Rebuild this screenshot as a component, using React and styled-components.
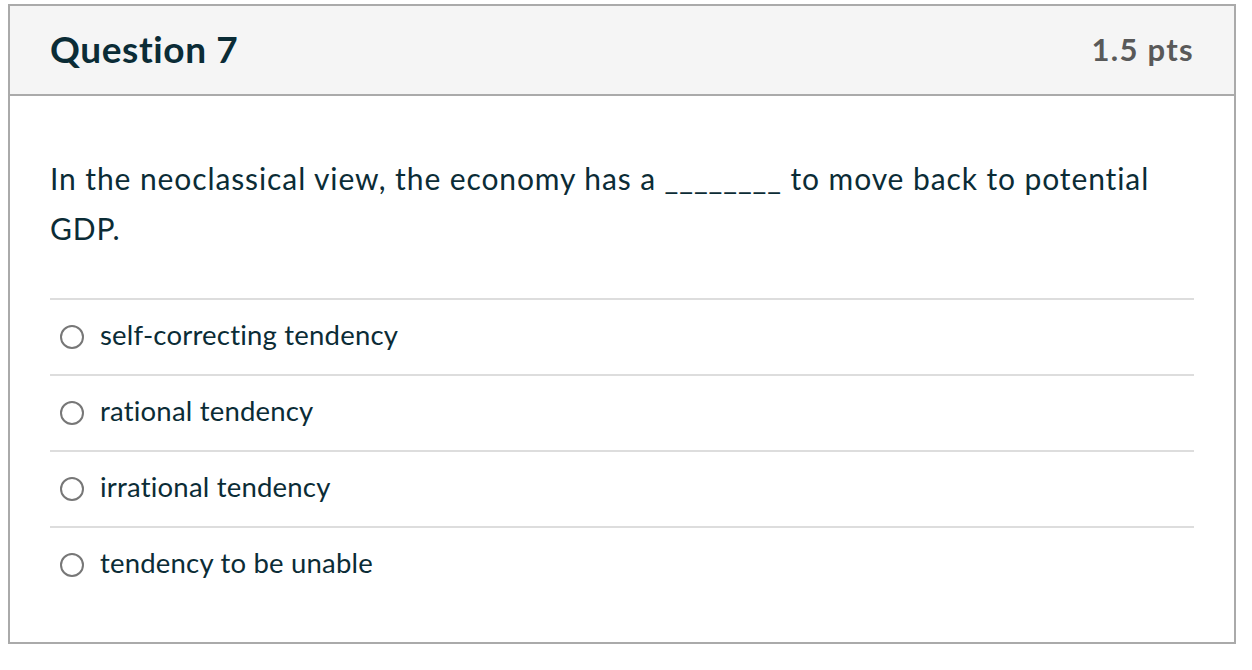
import React from 'react'
import styled, { createGlobalStyle } from 'styled-components'

const GlobalStyle = createGlobalStyle`
    body {
        margin: 0;
        background: #fff;
        font-family: Lato, "Open Sans", sans-serif;
    }
`;

const answers = [
    'self-correcting tendency',
    'rational tendency',
    'irrational tendency',
    'tendency to be unable'
]

const App = () => {
    return (
        <Page>
            <GlobalStyle />
            <Card>
                <Header>
                    <Title>Question 7</Title>
                    <Points>1.5 pts</Points>
                </Header>
                <Body>
                    <Prompt>
                        In the neoclassical view, the economy has a ________ to move back to potential GDP.
                    </Prompt>
                    <Answers>
                        {answers.map(a => (
                            <Answer key={a}>
                                <Radio type="radio" name="q7" />
                                <AnswerText>{a}</AnswerText>
                            </Answer>
                        ))}
                    </Answers>
                </Body>
            </Card>
        </Page>
    )
}

const Page = styled.div`
    padding: 4px 16px 0 8px;
`;

const Card = styled.div`
    width: 1228px;
    height: 640px;
    box-sizing: border-box;
    border: 2px solid #aaaaaa;
    display: flex;
    flex-direction: column;
`;

const Header = styled.div`
    height: 90px;
    box-sizing: border-box;
    background: #f5f5f5;
    border-bottom: 2px solid #aaaaaa;
    display: flex;
    align-items: center;
    justify-content: space-between;
    padding: 0 40px 3px;
`;

const Title = styled.h2`
    margin: 0;
    font-size: 37px;
    font-weight: 700;
    letter-spacing: 0.6px;
    color: #0b2c36;
`;

const Points = styled.div`
    font-size: 31px;
    font-weight: 700;
    letter-spacing: 1.3px;
    color: #595959;
`;

const Body = styled.div`
    padding: 57px 40px 0;
`;

const Prompt = styled.p`
    margin: 0 0 45px;
    font-size: 30px;
    line-height: 50px;
    letter-spacing: 0.9px;
    color: #0b2c36;
`;

const Answers = styled.div`
    display: flex;
    flex-direction: column;
`;

const Answer = styled.label`
    height: 76px;
    box-sizing: border-box;
    border-top: 2px solid #dddddd;
    display: flex;
    align-items: center;
    padding-left: 10px;
    gap: 16px;
`;

const Radio = styled.input`
    appearance: none;
    margin: 0;
    width: 24px;
    height: 24px;
    box-sizing: border-box;
    border: 2px solid #777777;
    border-radius: 50%;
    background: #fff;
`;

const AnswerText = styled.span`
    font-size: 27.5px;
    letter-spacing: 0.2px;
    padding-bottom: 5px;
    color: #0b2c36;
`;

export default App
